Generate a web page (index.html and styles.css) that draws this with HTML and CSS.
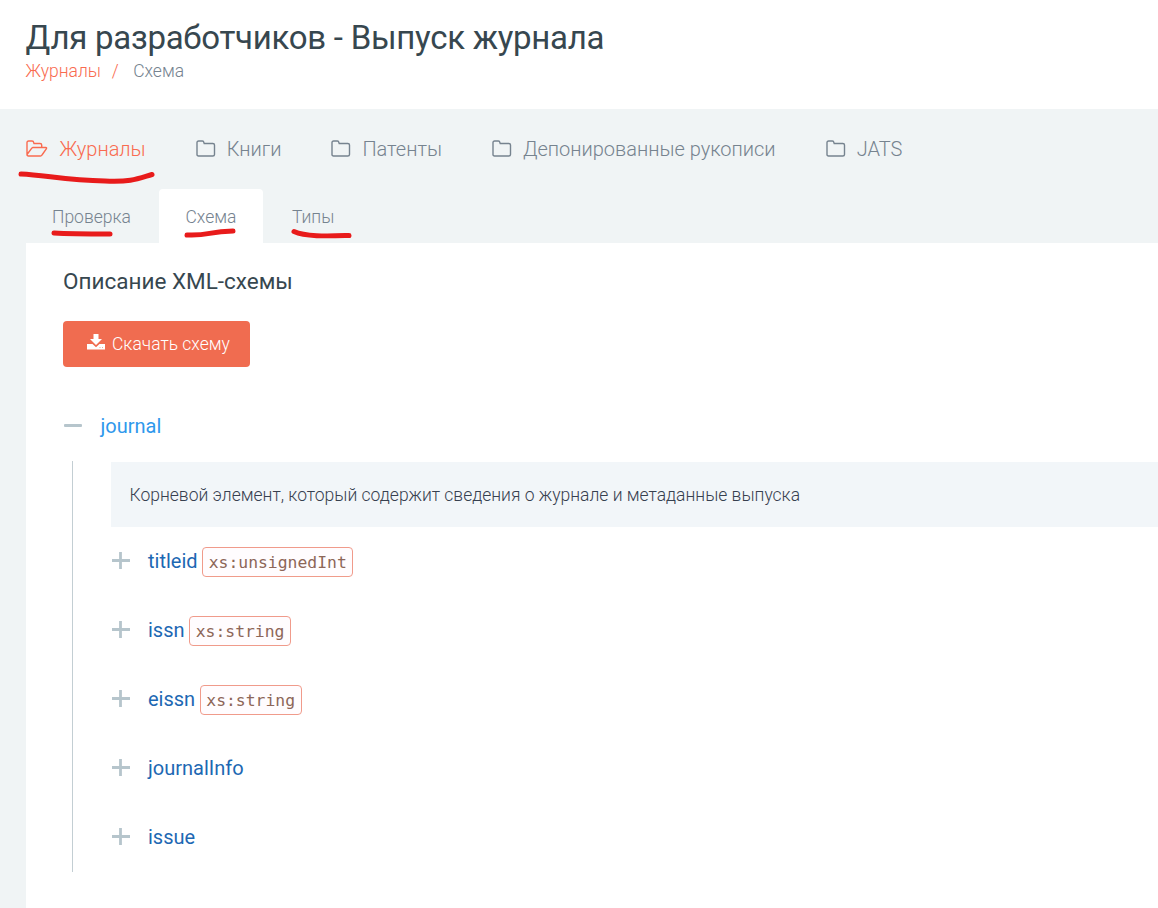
FILE: index.html
```html
<!DOCTYPE html>
<html lang="ru">
<head>
<meta charset="utf-8">
<title>Для разработчиков - Выпуск журнала</title>
<link rel="stylesheet" href="styles.css">
</head>
<body>
<svg class="sprite" aria-hidden="true">
  <symbol id="folder" viewBox="0 0 20 18"><path d="M1 15V2.6Q1 1 2.6 1H6.4Q7.7 1 7.9 2.6L8.2 3.5H16.8Q18.5 3.5 18.5 5V14.5Q18.5 16 16.8 16H2.5Q1 16 1 14.5"/></symbol>
  <symbol id="plus" viewBox="0 0 18 18"><path d="M0 8.500H18M8.500 0V17"/></symbol>
</svg>
<header class="page-header">
  <h1>Для разработчиков - Выпуск журнала</h1>
  <nav class="crumbs"><a>Журналы</a><span class="slash">/</span><span class="current">Схема</span></nav>
</header>
<main>
  <nav class="sections">
    <a class="section active"><svg class="open-folder" viewBox="0 0 22 18"><path d="M1 14.5V2.6Q1 1 2.6 1H6Q7.5 1 7.7 2.6L8 3.5H14Q15.7 3.5 15.7 5V7.5M1 14.5L5.8 8.2Q6.3 7.5 7 7.5H19.6Q21.2 7.5 20.3 8.8L16 15Q15.4 16 14.5 16H2.4Q1 16 1 14.5"/></svg>Журналы</a>
    <a class="section"><svg class="folder"><use href="#folder"/></svg>Книги</a>
    <a class="section"><svg class="folder"><use href="#folder"/></svg>Патенты</a>
    <a class="section"><svg class="folder"><use href="#folder"/></svg>Депонированные рукописи</a>
    <a class="section"><svg class="folder"><use href="#folder"/></svg>JATS</a>
  </nav>
  <nav class="tabs"><a class="tab">Проверка</a><a class="tab selected">Схема</a><a class="tab">Типы</a></nav>
  <section class="panel">
    <h2>Описание XML-схемы</h2>
    <a class="download"><svg viewBox="0 0 18 18"><path d="M6.500 0H11.500V5H15L9 11L3 5H6.500ZM0 10H5.500L9 13.200L12.500 10H18V15.500H0Z"/><path class="lights" d="M12.500 13.500H13.500M15 13.500H16"/></svg>Скачать схему</a>
    <div class="root"><span class="minus"></span><span>journal</span></div>
    <div class="children">
      <p class="description">Корневой элемент, который содержит сведения о журнале и метаданные выпуска</p>
      <div class="node"><svg><use href="#plus"/></svg><span>titleid</span><code>xs:unsignedInt</code></div>
      <div class="node"><svg><use href="#plus"/></svg><span>issn</span><code>xs:string</code></div>
      <div class="node"><svg><use href="#plus"/></svg><span>eissn</span><code>xs:string</code></div>
      <div class="node"><svg><use href="#plus"/></svg><span>journalInfo</span></div>
      <div class="node"><svg><use href="#plus"/></svg><span>issue</span></div>
    </div>
  </section>
</main>
<svg class="marks" viewBox="0 0 1158 908" aria-hidden="true">
  <path d="M21 174C45 175 65 180 105 181C132 182 137 179 152 174.500"/>
  <path d="M54 233C70 234 90 234 110 234"/>
  <path d="M187 235C210 236 207 231.500 233 231"/>
  <path d="M294 231.500C306 237 329 236 349 235.500"/>
</svg>
</body>
</html>
```

FILE: styles.css
```css
* { box-sizing: border-box; }
body { margin: 0; height: 908px; overflow: hidden; background: #fff; color: #37474f; font-family: Roboto, sans-serif; font-weight: 300; }
svg { fill: none; flex: none; }
.sprite { position: absolute; width: 0; height: 0; }
.page-header { height: 109px; padding: 16px 25.6px 0; }
h1 { margin: 0; font-size: 33px; line-height: 43px; font-weight: 400; letter-spacing: -0.27px; white-space: nowrap; }
.crumbs { display: flex; font-size: 17.5px; line-height: 24px; color: #76838f; }
.crumbs a, .slash { color: #f96b50; }
.slash { margin: 0 14.5px 0 10.7px; }
main { height: 799px; padding-left: 26px; background: #f0f4f5; }
.sections { display: flex; height: 80px; gap: 50px; font-size: 20px; }
.section { display: flex; align-items: center; color: #76838f; white-space: nowrap; }
.section.active { color: #f96b50; }
.section svg { height: 18px; margin-top: -1px; stroke: currentColor; stroke-width: 1.4; }
.section .folder { width: 20px; margin-right: 11px; }
.section .open-folder { width: 22px; margin-left: -0.5px; margin-right: 12px; }
.tabs { display: flex; height: 54px; font-size: 17.5px; color: #76838f; }
.tab { height: 54px; padding: 0 26px; line-height: 56px; }
.tab.selected { width: 104px; padding-left: 26.5px; background: #fff; border-radius: 4px 4px 0 0; margin: 0 3px 0 2px; }
.panel { height: 665px; padding: 24px 0 0 37px; background: #fff; }
h2 { margin: 0 0 26px; font-size: 22.5px; line-height: 28px; font-weight: 400; }
.download { display: flex; align-items: center; width: 187px; height: 46px; padding: 0 0 1px 24px; gap: 7px; border-radius: 4px; background: #f06c50; color: #fff; font-size: 17.5px; white-space: nowrap; }
.download svg { width: 18px; height: 18px; margin-top: -1px; fill: #fff; }
.lights { stroke: #f7a797; stroke-width: 1; }
.root { display: flex; align-items: center; gap: 18.5px; height: 28px; margin-top: 45px; color: #2f98ec; font-size: 20px; font-weight: 400; }
.minus { width: 18px; height: 3px; margin: -2px 0 0 1px; border-radius: 1px; background: #b6c5cc; }
.children { height: 411px; margin: 21px 0 0 9px; padding: 1px 0 0 38px; border-left: 1px solid #c3ced3; }
.description { height: 65px; margin: 0 0 -1px; padding-left: 18.5px; background: #f2f6f9; color: #37404f; font-size: 17.5px; line-height: 66px; white-space: nowrap; }
.node { display: flex; align-items: center; height: 69px; color: #1d68b3; font-size: 20px; font-weight: 400; }
.node svg { width: 18px; height: 18px; margin: 0 18.5px 0 0.5px; stroke: #b6c5cc; stroke-width: 2.8; }
.node code { height: 30px; margin: 2px 0 0 4.5px; padding: 1px 5.6px 0; border: 1px solid #f09b8b; border-radius: 4px; background: #fffcfe; color: #8d6658; font: 16.4px/28px "DejaVu Sans Mono", monospace; }
.marks { position: absolute; left: 0; top: 0; width: 1158px; height: 908px; stroke: #e81b1b; stroke-width: 5; stroke-linecap: round; stroke-linejoin: round; pointer-events: none; }
```
